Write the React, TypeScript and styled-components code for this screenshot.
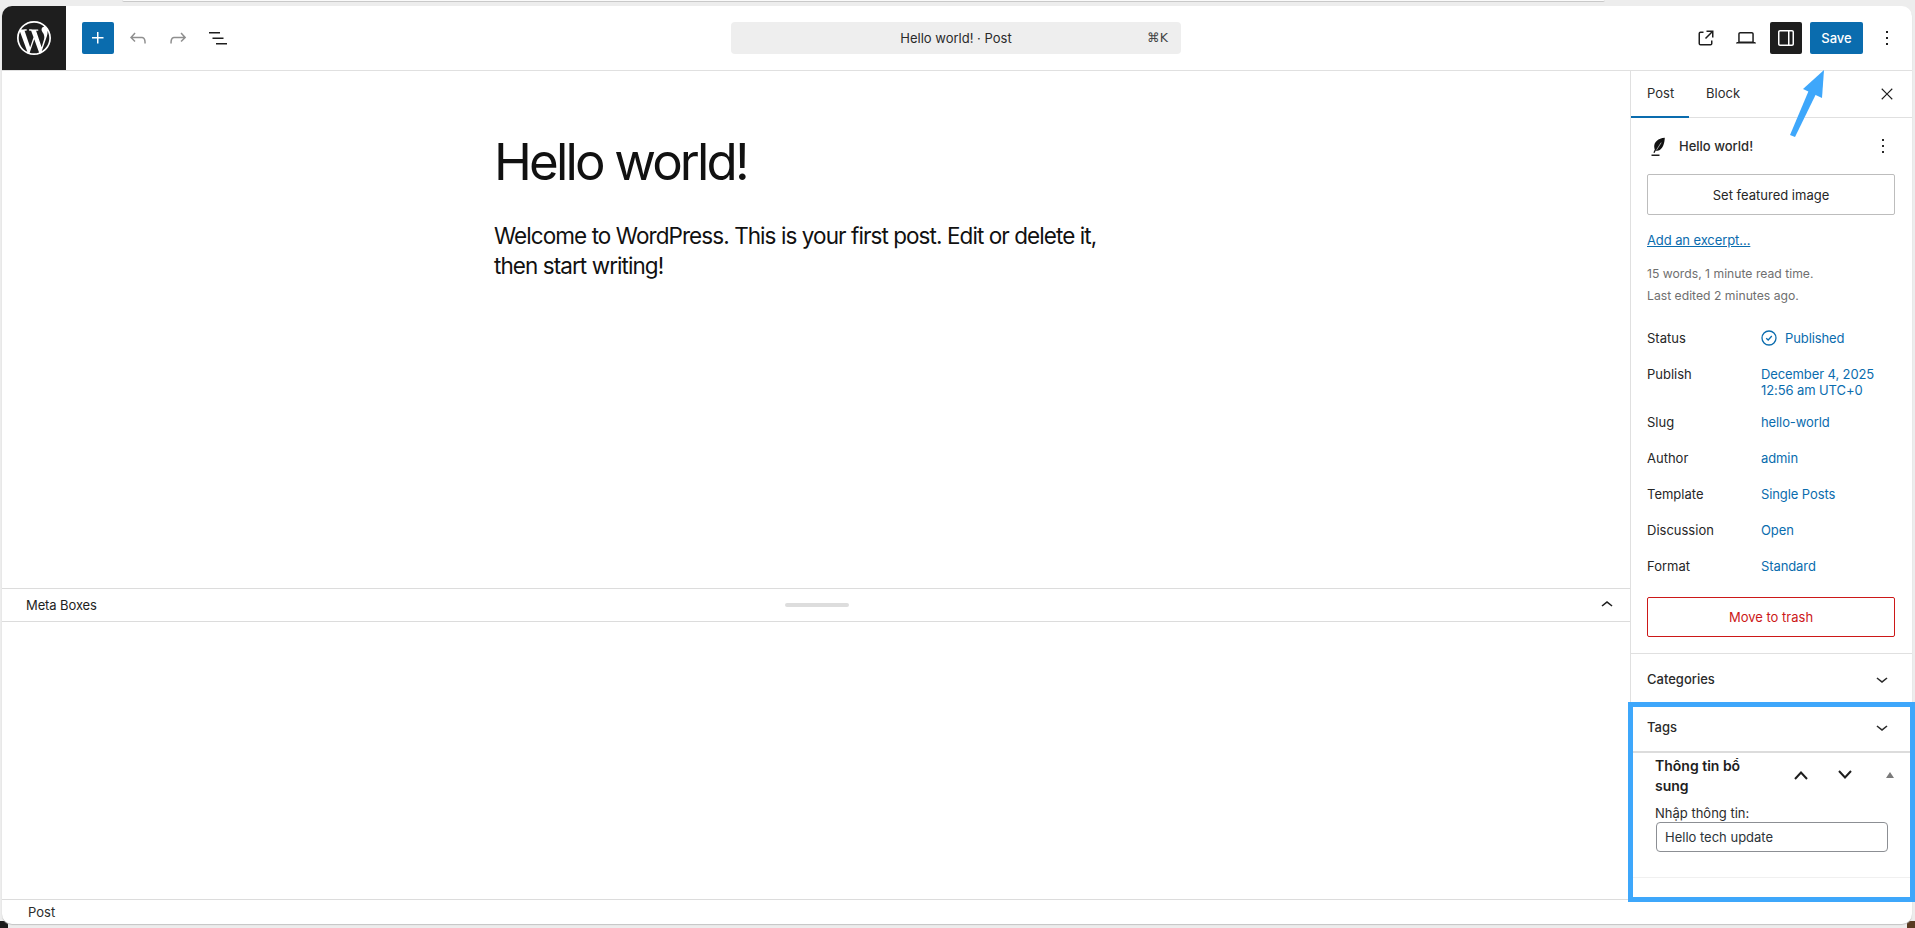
import React from "react";
import styled, { createGlobalStyle } from "styled-components";
import { SiWordpress } from "react-icons/si";

const Global = createGlobalStyle`
  html, body { margin: 0; padding: 0; height: 100%; overflow: hidden; }
  body { background: #e4e4e4; font-family: Inter, "Liberation Sans", sans-serif; color: #1e1e1e; font-size: 13px; }
  * { box-sizing: border-box; }
`;

const Screen = styled.div`
  position: relative;
  width: 1915px;
  height: 928px;
  display: flex;
  flex-direction: column;
  background: #ededed;
  overflow: hidden;
`;
const BrowserEdge = styled.div`
  height: 6px;
  flex: none;
  padding: 0 310px 0 122px;
`;
const BrowserEdgeLine = styled.div`
  height: 2px;
  background: #fafafa;
  border-bottom: 1px solid #c9c9c9;
  border-radius: 0 0 6px 6px;
`;
const Frame = styled.div`
  position: relative;
  z-index: 1;
  margin: 0 3px 0 2px;
  height: 918px;
  flex: none;
  display: flex;
  flex-direction: column;
  background: #fff;
  border-radius: 10px;
  overflow: hidden;
  box-shadow: 0 1px 1px #c4c4c4;
`;
const Corner = styled.div<{ $side: "left" | "right"; $color: string }>`
  position: absolute;
  bottom: 0;
  ${(p) => p.$side}: 0;
  width: 8px;
  height: 7px;
  background: ${(p) => p.$color};
`;
const TopBar = styled.header`
  height: 65px;
  flex: none;
  display: flex;
  align-items: center;
  border-bottom: 1px solid #e0e0e0;
`;
const Logo = styled.div`
  width: 64px;
  height: 64px;
  background: #1e1e1e;
  color: #fff;
  display: flex;
  align-items: center;
  justify-content: center;
  flex: none;
`;
const LeftTools = styled.div`
  display: flex;
  align-items: center;
  margin-left: 16px;
  gap: 8px;
  width: 649px;
  flex: none;
`;
const IconBtn = styled.button<{ $fill?: string; $color?: string; $w?: number }>`
  width: ${(p) => p.$w ?? 32}px;
  height: 32px;
  padding: 0;
  border: 0;
  border-radius: 2px;
  background: ${(p) => p.$fill ?? "transparent"};
  color: ${(p) => p.$color ?? "#1e1e1e"};
  display: flex;
  align-items: center;
  justify-content: center;
  flex: none;
`;
const Command = styled.div`
  position: relative;
  width: 450px;
  height: 32px;
  flex: none;
  background: #eeeeee;
  border-radius: 4px;
  display: flex;
  align-items: center;
  justify-content: center;
  font-size: 13px;
  color: #2a2a2a;
`;
const Shortcut = styled.span`
  position: absolute;
  right: 13px;
  top: 8px;
  font-size: 12.5px;
  font-family: "DejaVu Sans", sans-serif;
  color: #444;
`;
const RightTools = styled.div`
  margin-left: auto;
  margin-right: 9px;
  display: flex;
  align-items: center;
  gap: 8px;
`;
const SaveBtn = styled.button`
  width: 53px;
  height: 32px;
  border: 0;
  border-radius: 2px;
  background: #0a6cae;
  color: #fff;
  font: 500 13px Inter, sans-serif;
  padding: 0;
`;
const Body = styled.div`
  flex: 1;
  min-height: 0;
  display: flex;
`;
const Editor = styled.main`
  flex: 1;
  min-width: 0;
  display: flex;
  flex-direction: column;
`;
const Canvas = styled.div`
  height: 517px;
  flex: none;
  padding: 60px 0 0 492px;
`;
const PostTitle = styled.h1`
  margin: 0;
  font: 400 51px/1.2 Inter, sans-serif;
  letter-spacing: -2.85px;
  color: #111;
`;
const PostBody = styled.p`
  margin: 29px 0 0;
  width: 620px;
  font: 400 22.5px/30px Inter, sans-serif;
  letter-spacing: -0.93px;
  color: #111;
`;
const MetaBar = styled.div`
  position: relative;
  height: 34px;
  flex: none;
  display: flex;
  align-items: center;
  justify-content: space-between;
  padding: 0 11px 0 24px;
  border-top: 1px solid #dcdcdc;
  border-bottom: 1px solid #dcdcdc;
  font-size: 13px;
  letter-spacing: -0.1px;
`;
const Grip = styled.div`
  position: absolute;
  left: 783px;
  top: 14px;
  width: 64px;
  height: 4px;
  border-radius: 2px;
  background: #dddddd;
`;
const Sidebar = styled.aside`
  width: 282px;
  flex: none;
  border-left: 1px solid #e0e0e0;
  display: flex;
  flex-direction: column;
`;
const Tabs = styled.div`
  height: 47px;
  flex: none;
  display: flex;
  align-items: stretch;
  border-bottom: 1px solid #e0e0e0;
`;
const Tab = styled.div<{ $active?: boolean }>`
  padding: 0 0 3px ${(p) => (p.$active ? 16 : 17)}px;
  width: ${(p) => (p.$active ? 58 : 66)}px;
  display: flex;
  align-items: center;
  font-size: 13px;
  color: #2c2c2c;
  box-shadow: ${(p) => (p.$active ? "inset 0 -2px 0 #0a6cae" : "none")};
  height: 47px;
`;
const TabClose = styled.div`
  margin-left: auto;
  width: 48px;
  display: flex;
  align-items: center;
  justify-content: center;
  padding-right: 2px;
`;
const PostPanel = styled.section`
  padding: 12px 16px 16px;
  border-bottom: 1px solid #e0e0e0;
  height: 536px;
  flex: none;
`;
const PostHead = styled.div`
  height: 32px;
  margin-bottom: 12px;
  display: flex;
  align-items: center;
  gap: 8px;
  font-size: 13px;
  font-weight: 500;
  color: #2a2a2a;
`;
const PostMore = styled.div`
  margin-left: auto;
  margin-right: 1px;
  display: flex;
`;
const OutlineBtn = styled.button<{ $danger?: boolean }>`
  display: block;
  width: 248px;
  height: ${(p) => (p.$danger ? 40 : 41)}px;
  border-radius: 2px;
  background: #fff;
  border: 1px solid ${(p) => (p.$danger ? "#cc1818" : "#bdbdbd")};
  color: ${(p) => (p.$danger ? "#cc1818" : "#262626")};
  font: 400 13px Inter, sans-serif;
  padding: 0;
`;
const Excerpt = styled.a`
  display: block;
  margin-top: 16px;
  font-size: 13px;
  line-height: 18px;
  letter-spacing: -0.1px;
  color: #0a6cae;
  text-decoration: underline;
`;
const Stats = styled.div`
  margin-top: 14px;
  font-size: 12.2px;
  line-height: 22px;
  color: #6f6f6f;
`;
const Rows = styled.div`
  margin-top: 13px;
  display: flex;
  flex-direction: column;
`;
const Row = styled.div<{ $tall?: boolean }>`
  display: flex;
  height: ${(p) => (p.$tall ? 48 : 36)}px;
  padding-top: 9px;
  font-size: 13px;
  line-height: 18px;
`;
const RowLabel = styled.div`
  width: 114px;
  flex: none;
  color: #262626;
`;
const RowValue = styled.div`
  color: #0a6cae;
  line-height: 16px;
  padding-top: 1px;
  letter-spacing: -0.1px;
  display: flex;
  align-items: flex-start;
  gap: 8px;
`;
const TrashWrap = styled.div`
  margin-top: 13px;
`;
const Accordion = styled.div<{ $thick?: boolean }>`
  height: ${(p) => (p.$thick ? 50 : 49)}px;
  flex: none;
  display: flex;
  align-items: center;
  justify-content: space-between;
  padding: 0 18px 0 16px;
  font-size: 13px;
  font-weight: 500;
  color: #2a2a2a;
  border-bottom: ${(p) => (p.$thick ? "2px solid #dcdcdc" : "0")};
`;
const MetaPanel = styled.div`
  padding: 0 9px 0 24px;
  height: 125px;
  flex: none;
  border-bottom: 1px solid #f0f0f0;
`;
const MetaHead = styled.div`
  display: flex;
  align-items: center;
  height: 46px;
`;
const MetaTitle = styled.h2`
  margin: -1px 0 0;
  width: 100px;
  font: 600 14px/20px Inter, sans-serif;
  color: #1e1e1e;
`;
const MetaActions = styled.div`
  margin-left: auto;
  display: flex;
  align-items: center;
  margin-bottom: 2px;
`;
const MetaAction = styled.div`
  width: 44px;
  height: 36px;
  display: flex;
  align-items: center;
  justify-content: center;
`;
const Triangle = styled.div`
  width: 0;
  height: 0;
  margin: 0 9px 0 19px;
  border-left: 4px solid transparent;
  border-right: 4px solid transparent;
  border-bottom: 6px solid #7a7a7a;
`;
const FieldLabel = styled.label`
  display: block;
  margin-top: 5px;
  font-size: 13px;
  line-height: 18px;
  color: #2c2c2c;
`;
const TextInput = styled.input`
  display: block;
  width: 232px;
  height: 30px;
  margin: 0 0 0 1px;
  padding: 0 8px;
  border: 1px solid #8c8f94;
  border-radius: 4px;
  background: #fff;
  font: 400 13px Inter, sans-serif;
  color: #2c3338;
`;
const Footer = styled.footer`
  height: 25px;
  flex: none;
  display: flex;
  align-items: center;
  padding-left: 26px;
  font-size: 13px;
  color: #2c2c2c;
  border-top: 1px solid #dcdcdc;
`;
const Spacer = styled.div`
  flex: 1;
`;
const Highlight = styled.div`
  position: absolute;
  z-index: 2;
  left: 1628px;
  top: 702px;
  width: 287px;
  height: 200px;
  border: 5px solid #3ea7fb;
  pointer-events: none;
`;
const ArrowLayer = styled.svg`
  position: absolute;
  z-index: 2;
  left: 1780px;
  top: 60px;
  pointer-events: none;
`;

type P = { size?: number };
const Ico: React.FC<P & { d: string; color?: string }> = ({ d, size = 24, color = "currentColor" }) => (
  <svg width={size} height={size} viewBox="0 0 24 24" fill={color}><path d={d} /></svg>
);
const D = {
  plus: "M11 12.5V17.5H12.5V12.5H17.5V11H12.5V6H11V11H6V12.5H11Z",
  undo: "M18.3 11.7c-.6-.6-1.4-.9-2.3-.9H6.7l2.9-3.3-1.1-1-4.5 5L8.5 16l1-1-2.7-2.7H16c.5 0 .9.2 1.3.5 1 1 1 3.4 1 4.5v.3h1.5v-.2c0-1.5 0-4.3-1.5-5.7z",
  redo: "M15.6 6.5l-1.1 1 2.9 3.3H8c-.9 0-1.7.3-2.3.9-1.4 1.5-1.4 4.2-1.4 5.6v.2h1.5v-.3c0-1.1 0-3.5 1-4.5.3-.3.7-.5 1.3-.5h9.2L14.5 15l1.1 1.1 4.6-4.6-4.6-5z",
  list: "M3 6h11v1.5H3V6Zm3.5 5.5h11V13h-11v-1.5ZM21 17H10v1.5h11V17Z",
  external: "M19.5 4.5h-7V6h4.44l-5.97 5.97 1.06 1.06L18 7.06v4.44h1.5v-7Zm-13 1a2 2 0 0 0-2 2v10a2 2 0 0 0 2 2h10a2 2 0 0 0 2-2v-3H17v3a.5.5 0 0 1-.5.5h-10a.5.5 0 0 1-.5-.5v-10a.5.5 0 0 1 .5-.5h3V5.5h-3Z",
  desktop: "M20.5 16h-.7V8c0-1.1-.9-2-2-2H6.2c-1.1 0-2 .9-2 2v8h-.7c-.8 0-1.5.7-1.5 1.5h20c0-.8-.7-1.5-1.5-1.5zM5.7 8c0-.3.2-.5.5-.5h11.6c.3 0 .5.2.5.5v7.6H5.7V8z",
  sidebar: "M18 4H6c-1.1 0-2 .9-2 2v12c0 1.1.9 2 2 2h12c1.1 0 2-.9 2-2V6c0-1.1-.9-2-2-2zm-4 14.5H6c-.3 0-.5-.2-.5-.5V6c0-.3.2-.5.5-.5h8v13zm4.5-.5c0 .3-.2.5-.5.5h-2.5v-13H18c.3 0 .5.2.5.5v12z",
  more: "M13 19h-2v-2h2v2zm0-6h-2v-2h2v2zm0-6h-2V5h2v2z",
  close: "m13.06 12 6.47-6.47-1.06-1.06L12 10.94 5.53 4.47 4.47 5.53 10.94 12l-6.47 6.47 1.06 1.06L12 13.06l6.47 6.47 1.06-1.06L13.06 12Z",
  down: "M17.5 11.6L12 16l-5.5-4.4.9-1.2L12 14l4.5-3.6 1 1.2z",
  up: "M6.5 12.4L12 8l5.5 4.4-.9 1.2L12 10l-4.5 3.6-1-1.2z",
};
const Feather = () => (
  <svg width="24" height="24" viewBox="0 0 24 24">
    <path d="M4.5 20.6h8v1.4h-8z" fill="#1e1e1e" />
    <path d="M17.8 3.8C11 4.4 7.2 8 7.2 12.6c0 1.2.3 2.3.6 3L6.4 18.4l1.1.5 1.3-2.3c1.3.4 2.8.2 4-.6 3.1-2.1 4.8-6.6 5-12.2z" fill="#111" />
    <path d="M9.6 15.8 14.2 8.6" stroke="#fff" strokeWidth=".6" />
  </svg>
);
const BoldChevron: React.FC<{ up?: boolean }> = ({ up }) => (
  <svg width="16" height="12" viewBox="0 0 16 12" fill="none" stroke="#1e1e1e" strokeWidth="2">
    <path d={up ? "M2 10 8 3.5 14 10" : "M2 2 8 8.5 14 2"} />
  </svg>
);
const Published = () => (
  <svg width="16" height="16" viewBox="0 0 16 16" fill="none" stroke="#0a6cae">
    <circle cx="8" cy="8" r="7" strokeWidth="1.3" />
    <path d="M5.2 8.2 7.2 10 10.8 6" strokeWidth="1.3" />
  </svg>
);

export default function App() {
  return (
    <Screen>
      <Global />
      <Corner $side="left" $color="#1c1c1c" />
      <Corner $side="right" $color="#5a3b22" />
      <BrowserEdge><BrowserEdgeLine /></BrowserEdge>
      <Frame>
        <TopBar>
          <Logo><SiWordpress size={34} /></Logo>
          <LeftTools>
            <IconBtn $fill="#0a6cae" $color="#fff"><Ico d={D.plus} /></IconBtn>
            <IconBtn $color="#8f8f8f"><Ico d={D.undo} /></IconBtn>
            <IconBtn $color="#8f8f8f"><Ico d={D.redo} /></IconBtn>
            <IconBtn><Ico d={D.list} /></IconBtn>
          </LeftTools>
          <Command>
            Hello world! · Post
            <Shortcut>⌘K</Shortcut>
          </Command>
          <RightTools>
            <IconBtn><Ico d={D.external} /></IconBtn>
            <IconBtn><Ico d={D.desktop} /></IconBtn>
            <IconBtn $fill="#1e1e1e" $color="#fff"><Ico d={D.sidebar} /></IconBtn>
            <SaveBtn>Save</SaveBtn>
            <IconBtn><Ico d={D.more} /></IconBtn>
          </RightTools>
        </TopBar>
        <Body>
          <Editor>
            <Canvas>
              <PostTitle>Hello world!</PostTitle>
              <PostBody>Welcome to WordPress. This is your first post. Edit or delete it, then start writing!</PostBody>
            </Canvas>
            <MetaBar>
              Meta Boxes
              <Grip />
              <Ico d={D.up} />
            </MetaBar>
            <Spacer />
          </Editor>
          <Sidebar>
            <Tabs>
              <Tab $active>Post</Tab>
              <Tab>Block</Tab>
              <TabClose><Ico d={D.close} size={18} /></TabClose>
            </Tabs>
            <PostPanel>
              <PostHead>
                <Feather />
                Hello world!
                <PostMore><Ico d={D.more} /></PostMore>
              </PostHead>
              <OutlineBtn>Set featured image</OutlineBtn>
              <Excerpt>Add an excerpt…</Excerpt>
              <Stats>15 words, 1 minute read time.<br />Last edited 2 minutes ago.</Stats>
              <Rows>
                <Row><RowLabel>Status</RowLabel><RowValue><Published />Published</RowValue></Row>
                <Row $tall><RowLabel>Publish</RowLabel><RowValue>December 4, 2025<br />12:56 am UTC+0</RowValue></Row>
                <Row><RowLabel>Slug</RowLabel><RowValue>hello-world</RowValue></Row>
                <Row><RowLabel>Author</RowLabel><RowValue>admin</RowValue></Row>
                <Row><RowLabel>Template</RowLabel><RowValue>Single Posts</RowValue></Row>
                <Row><RowLabel>Discussion</RowLabel><RowValue>Open</RowValue></Row>
                <Row><RowLabel>Format</RowLabel><RowValue>Standard</RowValue></Row>
              </Rows>
              <TrashWrap><OutlineBtn $danger>Move to trash</OutlineBtn></TrashWrap>
            </PostPanel>
            <Accordion>Categories<Ico d={D.down} /></Accordion>
            <Accordion $thick>Tags<Ico d={D.down} /></Accordion>
            <MetaPanel>
              <MetaHead>
                <MetaTitle>Thông tin bổ sung</MetaTitle>
                <MetaActions>
                  <MetaAction><BoldChevron up /></MetaAction>
                  <MetaAction><BoldChevron /></MetaAction>
                  <Triangle />
                </MetaActions>
              </MetaHead>
              <FieldLabel>Nhập thông tin:</FieldLabel>
              <TextInput defaultValue="Hello tech update" />
            </MetaPanel>
          </Sidebar>
        </Body>
        <Footer>Post</Footer>
      </Frame>
      <Highlight />
      <ArrowLayer width="60" height="90" viewBox="0 0 60 90" fill="#3ea7fb">
        <path d="M10 75 L29 30 L36 34 L15 77 Z" />
        <path d="M44 10 L23 29 L42 38 Z" />
      </ArrowLayer>
    </Screen>
  );
}
